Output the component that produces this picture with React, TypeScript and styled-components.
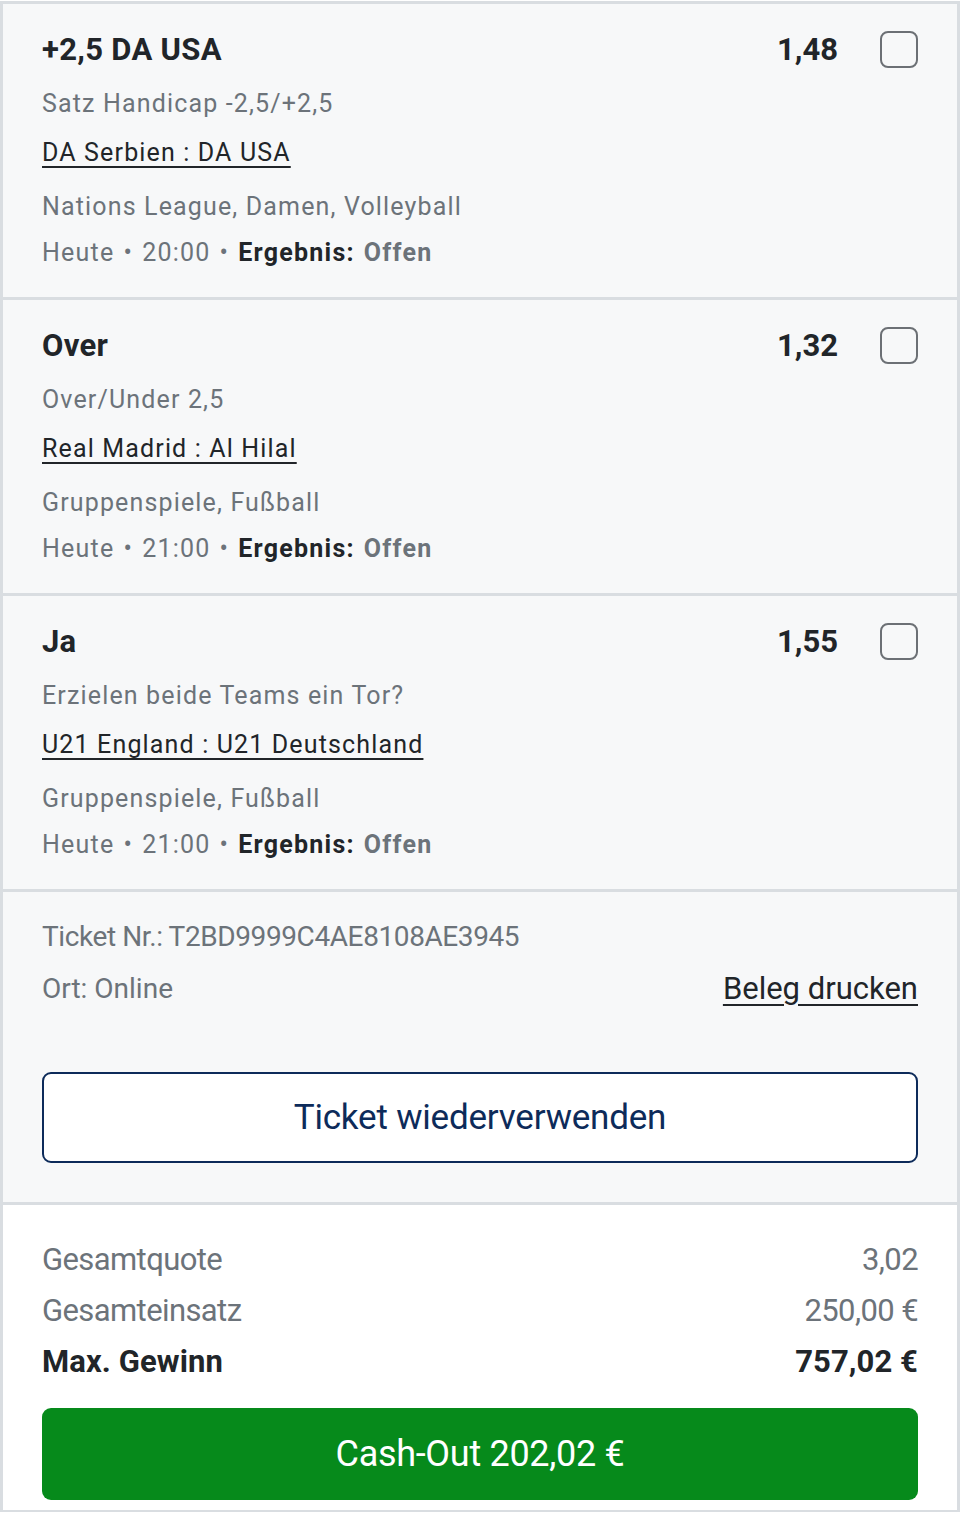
import React from "react";
import styled, { createGlobalStyle } from "styled-components";

const Global = createGlobalStyle`
  html, body { margin: 0; padding: 0; background: #ffffff; }
  body { font-family: Roboto, "Liberation Sans", Arial, sans-serif; -webkit-font-smoothing: antialiased; }
  * { box-sizing: border-box; }
`;

const Page = styled.div`
  width: 960px;
  border-left: 3px solid #d9dde1;
  border-right: 3px solid #d9dde1;
  border-top: 3px solid #d9dde1;
  border-bottom: 2px solid #d9dde1;
  margin-top: 1px;
`;

const Bet = styled.section`
  background: #f7f8f9;
  padding: 25px 39px 27px 39px;
  border-bottom: 3px solid #d9dde1;
  display: flex;
  flex-direction: column;
`;

const TitleRow = styled.div`
  display: flex;
  align-items: center;
  height: 40px;
`;

const Title = styled.div`
  flex: 1;
  font-size: 31px;
  font-weight: 700;
  color: #212529;
  letter-spacing: 0.3px;
`;

const Odds = styled.div`
  font-size: 31px;
  font-weight: 700;
  color: #212529;
  margin-right: 42px;
`;

const Check = styled.span`
  width: 38px;
  height: 37px;
  border: 2.5px solid #6c7075;
  border-radius: 8px;
  display: inline-block;
`;

const Line = styled.div<{ $mt: number; $dark?: boolean; $underline?: boolean }>`
  margin-top: ${(p) => p.$mt}px;
  height: 34px;
  line-height: 34px;
  font-size: 25px;
  letter-spacing: 1.15px;
  color: ${(p) => (p.$dark ? "#212529" : "#6c737a")};
  text-decoration: ${(p) => (p.$underline ? "underline" : "none")};
  text-decoration-thickness: 2px;
  text-underline-offset: 5px;
  white-space: nowrap;
`;

const MetaLine = styled(Line)`
  word-spacing: 1.5px;
  letter-spacing: 1.25px;
`;

const Strong = styled.span<{ $dark?: boolean }>`
  font-weight: 700;
  color: ${(p) => (p.$dark ? "#212529" : "#6c737a")};
`;

const Ticket = styled.section`
  background: #f7f8f9;
  padding: 28px 39px 39px 39px;
  border-bottom: 3px solid #d9dde1;
  display: flex;
  flex-direction: column;
`;

const TicketNr = styled.div`
  height: 34px;
  line-height: 34px;
  font-size: 28px;
  color: #6c737a;
  letter-spacing: -0.4px;
  white-space: nowrap;
`;

const InfoRow = styled.div`
  margin-top: 16px;
  height: 36px;
  display: flex;
  align-items: center;
  justify-content: space-between;
`;

const Ort = styled.span`
  font-size: 28px;
  color: #6c737a;
  letter-spacing: 0px;
`;

const PrintLink = styled.a`
  font-size: 31px;
  color: #212529;
  text-decoration: underline;
  text-decoration-thickness: 2px;
  text-underline-offset: 5px;
  cursor: pointer;
`;

const OutlineButton = styled.button`
  margin-top: 66px;
  height: 91px;
  width: 100%;
  border: 2.5px solid #0d2b5a;
  border-radius: 9px;
  background: #ffffff;
  color: #0d2b5a;
  font-family: inherit;
  font-size: 35px;
  letter-spacing: -0.2px;
  cursor: pointer;
`;

const Summary = styled.section`
  background: #ffffff;
  padding: 29px 39px 10px 39px;
  display: flex;
  flex-direction: column;
`;

const SumRow = styled.div<{ $bold?: boolean }>`
  height: 51px;
  display: flex;
  align-items: center;
  justify-content: space-between;
  font-size: 31px;
  letter-spacing: ${(p) => (p.$bold ? "0.1px" : "-0.6px")};
  font-weight: ${(p) => (p.$bold ? 700 : 400)};
  color: ${(p) => (p.$bold ? "#212529" : "#6c737a")};
`;

const CashOut = styled.button`
  margin-top: 21px;
  height: 92px;
  width: 100%;
  border: none;
  border-radius: 9px;
  background: #068a1b;
  color: #ffffff;
  font-family: inherit;
  font-size: 36px;
  letter-spacing: -0.3px;
  cursor: pointer;
`;

type BetData = {
  pick: string;
  odds: string;
  market: string;
  match: string;
  league: string;
  time: string;
};

const bets: BetData[] = [
  {
    pick: "+2,5 DA USA",
    odds: "1,48",
    market: "Satz Handicap -2,5/+2,5",
    match: "DA Serbien : DA USA",
    league: "Nations League, Damen, Volleyball",
    time: "20:00",
  },
  {
    pick: "Over",
    odds: "1,32",
    market: "Over/Under 2,5",
    match: "Real Madrid : Al Hilal",
    league: "Gruppenspiele, Fußball",
    time: "21:00",
  },
  {
    pick: "Ja",
    odds: "1,55",
    market: "Erzielen beide Teams ein Tor?",
    match: "U21 England : U21 Deutschland",
    league: "Gruppenspiele, Fußball",
    time: "21:00",
  },
];

export default function App() {
  return (
    <>
      <Global />
      <Page>
        {bets.map((b) => (
          <Bet key={b.match}>
            <TitleRow>
              <Title>{b.pick}</Title>
              <Odds>{b.odds}</Odds>
              <Check />
            </TitleRow>
            <Line $mt={18}>{b.market}</Line>
            <Line $mt={15} $dark $underline>
              {b.match}
            </Line>
            <Line $mt={20}>{b.league}</Line>
            <MetaLine $mt={12}>
              Heute • {b.time} • <Strong $dark>Ergebnis:</Strong> <Strong>Offen</Strong>
            </MetaLine>
          </Bet>
        ))}
        <Ticket>
          <TicketNr>Ticket Nr.: T2BD9999C4AE8108AE3945</TicketNr>
          <InfoRow>
            <Ort>Ort: Online</Ort>
            <PrintLink>Beleg drucken</PrintLink>
          </InfoRow>
          <OutlineButton>Ticket wiederverwenden</OutlineButton>
        </Ticket>
        <Summary>
          <SumRow>
            <span>Gesamtquote</span>
            <span>3,02</span>
          </SumRow>
          <SumRow>
            <span>Gesamteinsatz</span>
            <span>250,00 €</span>
          </SumRow>
          <SumRow $bold>
            <span>Max. Gewinn</span>
            <span>757,02 €</span>
          </SumRow>
          <CashOut>Cash-Out 202,02 €</CashOut>
        </Summary>
      </Page>
    </>
  );
}
